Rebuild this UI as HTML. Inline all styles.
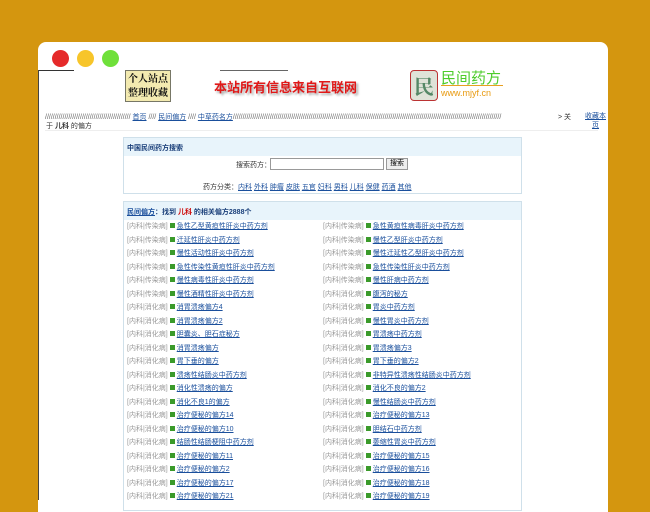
<!DOCTYPE html>
<html><head><meta charset="utf-8"><style>
*{margin:0;padding:0;box-sizing:border-box}
body{width:650px;height:500px;overflow:hidden;background:#d4960f;font-family:"Liberation Sans","Noto Sans CJK SC",sans-serif;position:relative}
.win{position:absolute;left:38px;top:42px;width:570px;height:470px;background:#fff;border-radius:8px 8px 0 0}
.dot{position:absolute;top:50px;width:17px;height:17px;border-radius:50%}
.bar{position:absolute;background:#333;height:1px;top:70px}
.t{position:absolute;font-size:7px;color:#333;white-space:nowrap}
a{color:#1a4f9c;text-decoration:underline}
.box{position:absolute;left:123px;width:399px;border:1px solid #cfe0ea}
.bh{background:#e8f4fb;height:18px;font-size:7px;font-weight:bold;color:#1a3f7a;padding:5px 3px}
.row{position:absolute;font-size:7px;white-space:nowrap}
.c{color:#999}
.ic{display:inline-block;width:5px;height:5px;background:#3a9a2a;margin:0 2px 0 2px;vertical-align:0}
</style></head><body>
<div class="win"></div>
<div class="dot" style="left:52px;background:#e52a2a"></div>
<div class="dot" style="left:77px;background:#f7c52a"></div>
<div class="dot" style="left:102px;background:#6fe03a"></div>
<div class="bar" style="left:38px;width:36px"></div>
<div class="bar" style="left:220px;width:68px;background:#666"></div>
<div style="position:absolute;left:38px;top:70px;width:1px;height:430px;background:#444"></div>
<div style="position:absolute;left:125px;top:70px;width:46px;height:32px;background:#f3eab0;border:1px solid #776;font:bold 10px 'Noto Serif CJK SC',serif;line-height:14px;text-align:center;color:#111">个人站点<br>整理收藏</div>
<div style="position:absolute;left:214px;top:77px;font:bold 13px 'Noto Sans CJK SC',sans-serif;color:#e01818;text-shadow:2px 2px 2px #aaa">本站所有信息来自互联网</div>
<div style="position:absolute;left:410px;top:70px;width:28px;height:31px;border:1px solid #b33;border-radius:4px;background:#dfe3d8;font:bold 20px 'Noto Serif CJK SC',serif;color:#586;text-align:center;line-height:29px">民</div>
<div style="position:absolute;left:441px;top:67px;font:15px 'Noto Sans CJK SC',sans-serif;color:#4ccc2a">民间药方</div>
<div style="position:absolute;left:441px;top:85px;width:62px;height:1px;background:#e8a020"></div>
<div style="position:absolute;left:441px;top:88px;font-size:9px;color:#e89a10">www.mjyf.cn</div>
<div class="t" style="left:45px;top:112px;width:530px;overflow:hidden;color:#666">//////////////////////////////////////////// <a>首页</a> //// <a>民间偏方</a> //// <a>中草药名方</a>//////////////////////////////////////////////////////////////////////////////////////////////////////////////////////////////////////////</div>
<div class="t" style="left:558px;top:112px">&gt; 关</div>
<div class="t" style="left:46px;top:121px">于 <b>儿科</b> 的偏方</div>
<div class="t" style="left:585px;top:112px;line-height:9px;text-align:center"><a>收藏本</a><br><a>页</a></div>
<div style="position:absolute;left:45px;top:130px;width:553px;height:1px;background:#eee"></div>
<div class="box" style="top:137px;height:57px"><div class="bh">中国民间药方搜索</div></div>
<div class="t" style="left:236px;top:160px">搜索药方：</div>
<div style="position:absolute;left:270px;top:158px;width:114px;height:12px;border:1px solid #999"></div>
<div style="position:absolute;left:386px;top:158px;width:22px;height:12px;border:1px solid #999;background:#eee;font-size:7px;text-align:center;line-height:10px">搜索</div>
<div class="t" style="left:203px;top:182px">药方分类：<a>内科</a> <a>外科</a> <a>肿瘤</a> <a>皮肤</a> <a>五官</a> <a>妇科</a> <a>男科</a> <a>儿科</a> <a>保健</a> <a>药酒</a> <a>其他</a></div>
<div class="box" style="top:201px;height:310px"><div class="bh"><a>民间偏方</a>：找到 <span style="color:#c00">儿科</span> 的相关偏方2888个</div></div>
<div class="row" style="left:127px;top:220px;line-height:13.5px">
<span class="c">[内科|传染病]</span><span class="ic"></span><a>急性乙型黄疸性肝炎中药方剂</a><br>
<span class="c">[内科|传染病]</span><span class="ic"></span><a>迁延性肝炎中药方剂</a><br>
<span class="c">[内科|传染病]</span><span class="ic"></span><a>慢性活动性肝炎中药方剂</a><br>
<span class="c">[内科|传染病]</span><span class="ic"></span><a>急性传染性黄疸性肝炎中药方剂</a><br>
<span class="c">[内科|传染病]</span><span class="ic"></span><a>慢性病毒性肝炎中药方剂</a><br>
<span class="c">[内科|传染病]</span><span class="ic"></span><a>慢性酒精性肝炎中药方剂</a><br>
<span class="c">[内科|消化病]</span><span class="ic"></span><a>消胃溃疡偏方4</a><br>
<span class="c">[内科|消化病]</span><span class="ic"></span><a>消胃溃疡偏方2</a><br>
<span class="c">[内科|消化病]</span><span class="ic"></span><a>胆囊炎、胆石症秘方</a><br>
<span class="c">[内科|消化病]</span><span class="ic"></span><a>消胃溃疡偏方</a><br>
<span class="c">[内科|消化病]</span><span class="ic"></span><a>胃下垂的偏方</a><br>
<span class="c">[内科|消化病]</span><span class="ic"></span><a>溃疡性结肠炎中药方剂</a><br>
<span class="c">[内科|消化病]</span><span class="ic"></span><a>消化性溃疡的偏方</a><br>
<span class="c">[内科|消化病]</span><span class="ic"></span><a>消化不良1的偏方</a><br>
<span class="c">[内科|消化病]</span><span class="ic"></span><a>治疗便秘的偏方14</a><br>
<span class="c">[内科|消化病]</span><span class="ic"></span><a>治疗便秘的偏方10</a><br>
<span class="c">[内科|消化病]</span><span class="ic"></span><a>结肠性结肠梗阻中药方剂</a><br>
<span class="c">[内科|消化病]</span><span class="ic"></span><a>治疗便秘的偏方11</a><br>
<span class="c">[内科|消化病]</span><span class="ic"></span><a>治疗便秘的偏方2</a><br>
<span class="c">[内科|消化病]</span><span class="ic"></span><a>治疗便秘的偏方17</a><br>
<span class="c">[内科|消化病]</span><span class="ic"></span><a>治疗便秘的偏方21</a></div>
<div class="row" style="left:323px;top:220px;line-height:13.5px">
<span class="c">[内科|传染病]</span><span class="ic"></span><a>急性黄疸性病毒肝炎中药方剂</a><br>
<span class="c">[内科|传染病]</span><span class="ic"></span><a>慢性乙型肝炎中药方剂</a><br>
<span class="c">[内科|传染病]</span><span class="ic"></span><a>慢性迁延性乙型肝炎中药方剂</a><br>
<span class="c">[内科|传染病]</span><span class="ic"></span><a>急性传染性肝炎中药方剂</a><br>
<span class="c">[内科|传染病]</span><span class="ic"></span><a>慢性肝病中药方剂</a><br>
<span class="c">[内科|消化病]</span><span class="ic"></span><a>腹泻的秘方</a><br>
<span class="c">[内科|消化病]</span><span class="ic"></span><a>胃炎中药方剂</a><br>
<span class="c">[内科|消化病]</span><span class="ic"></span><a>慢性胃炎中药方剂</a><br>
<span class="c">[内科|消化病]</span><span class="ic"></span><a>胃溃疡中药方剂</a><br>
<span class="c">[内科|消化病]</span><span class="ic"></span><a>胃溃疡偏方3</a><br>
<span class="c">[内科|消化病]</span><span class="ic"></span><a>胃下垂的偏方2</a><br>
<span class="c">[内科|消化病]</span><span class="ic"></span><a>非特异性溃疡性结肠炎中药方剂</a><br>
<span class="c">[内科|消化病]</span><span class="ic"></span><a>消化不良的偏方2</a><br>
<span class="c">[内科|消化病]</span><span class="ic"></span><a>慢性结肠炎中药方剂</a><br>
<span class="c">[内科|消化病]</span><span class="ic"></span><a>治疗便秘的偏方13</a><br>
<span class="c">[内科|消化病]</span><span class="ic"></span><a>胆结石中药方剂</a><br>
<span class="c">[内科|消化病]</span><span class="ic"></span><a>萎缩性胃炎中药方剂</a><br>
<span class="c">[内科|消化病]</span><span class="ic"></span><a>治疗便秘的偏方15</a><br>
<span class="c">[内科|消化病]</span><span class="ic"></span><a>治疗便秘的偏方16</a><br>
<span class="c">[内科|消化病]</span><span class="ic"></span><a>治疗便秘的偏方18</a><br>
<span class="c">[内科|消化病]</span><span class="ic"></span><a>治疗便秘的偏方19</a></div>
</body></html>
